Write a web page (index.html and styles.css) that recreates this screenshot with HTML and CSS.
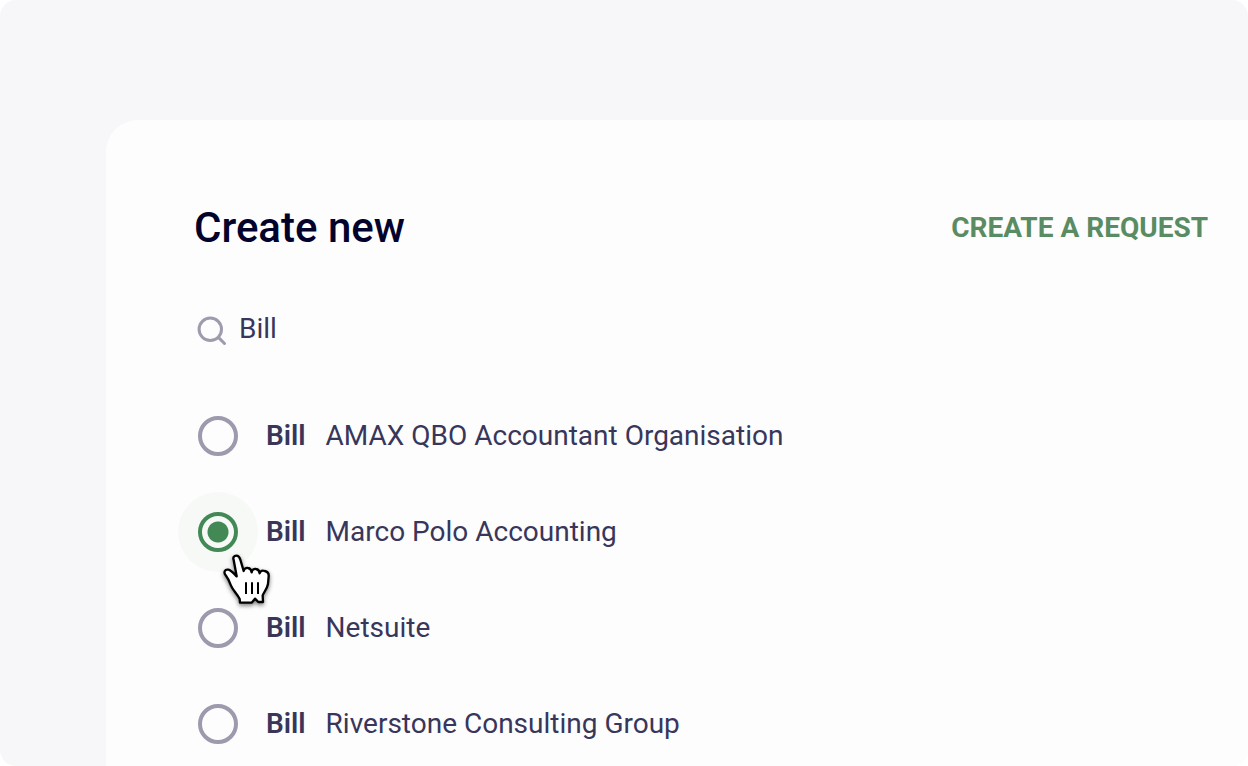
FILE: index.html
```html
<!DOCTYPE html>
<html lang="en">
<head>
<meta charset="utf-8">
<meta name="viewport" content="width=device-width, initial-scale=1">
<title>Create new</title>
<link rel="stylesheet" href="styles.css">
</head>
<body>
<div class="stage">
  <main class="panel">
    <header class="panel-header">
      <h1 class="title">Create new</h1>
      <button class="request" type="button">CREATE A REQUEST</button>
    </header>
    <div class="search">
      <svg class="search-icon" viewBox="0 0 32 32" aria-hidden="true"><circle cx="14.3" cy="14.3" r="11.2"/><path d="M22.4 22.4L28.5 28.5"/></svg>
      <input class="search-input" type="text" value="Bill" aria-label="Search">
    </div>
    <div class="options" role="radiogroup" aria-label="Organisation">
      <label class="option"><input class="radio" type="radio" name="org"><strong class="kind">Bill</strong><span>AMAX QBO Accountant Organisation</span></label>
      <label class="option"><input class="radio" type="radio" name="org" checked><strong class="kind">Bill</strong><span>Marco Polo Accounting</span>
        <svg class="cursor" viewBox="0 0 180 195" aria-hidden="true">
          <path class="hand" d="M56 45C53 37 57 32 64 32C71 32 74 37 76 44L86 78C87 71 93 68 99 69C106 70 109 74 110 82C111 74 117 71 123 72C130 73 133 78 134 85C136 77 143 76 149 78C158 80 162 85 161 94L159 117C157 130 147 141 143 151L144 171H130L120 161L110 173H75L74 162C66 145 54 137 48 122C44 112 40 101 32 91C25 82 29 72 40 74C49 76 57 86 65 94Z"/>
          <path class="fingers" d="M93 112V147M111 112V147M129 112V147"/>
        </svg>
      </label>
      <label class="option"><input class="radio" type="radio" name="org"><strong class="kind">Bill</strong><span>Netsuite</span></label>
      <label class="option"><input class="radio" type="radio" name="org"><strong class="kind">Bill</strong><span>Riverstone Consulting Group</span></label>
    </div>
  </main>
</div>
</body>
</html>
```
FILE: styles.css
```css
* { box-sizing: border-box; }

body {
  margin: 0;
  background: #fff;
  color: #38365b;
  font: 400 28px/40px Roboto, sans-serif;
}

.stage {
  display: flex;
  height: 100vh;
  padding: 120px 0 0 106px;
  overflow: hidden;
  border-radius: 16px;
  background: #f7f7f9;
}

.panel {
  flex: 1;
  padding: 80px 40px 0 88px;
  border-top-left-radius: 32px;
  background: #fdfdfd;
}

.panel-header {
  display: flex;
  align-items: center;
  justify-content: space-between;
}

.title {
  margin: 0;
  color: #03022d;
  font-size: 42px;
  font-weight: 500;
  line-height: 56px;
}

.request {
  padding: 0;
  border: 0;
  background: none;
  color: #5a8c63;
  font: inherit;
  font-weight: 700;
}

.search {
  display: flex;
  align-items: center;
  gap: 11px;
  margin: 53px 0 39px 2px;
}

.search-icon {
  width: 32px;
  height: 32px;
  margin-top: 3px;
  fill: none;
  stroke: #9d9bad;
  stroke-width: 3;
  stroke-linecap: round;
}

.search-input {
  flex: 1;
  min-width: 0;
  height: 40px;
  padding: 0;
  border: 0;
  outline: 0;
  background: none;
  color: inherit;
  font: inherit;
}

.option {
  position: relative;
  display: flex;
  align-items: center;
  height: 96px;
  padding-left: 4px;
}

.radio {
  flex: none;
  width: 40px;
  height: 40px;
  margin: 0 28px 0 0;
  border: 4px solid #9c9aad;
  border-radius: 50%;
  appearance: none;
}

.radio:checked {
  border-color: #438956;
  background: radial-gradient(circle, #438956 10px, #f7f9f7 11px);
  box-shadow: 0 0 0 20px #f7f9f7;
}

.kind {
  position: relative;
  margin-right: 20px;
  font-weight: 600;
}

.cursor {
  position: absolute;
  top: 61px;
  left: 21px;
  width: 60px;
  height: 65px;
  z-index: 1;
  filter: drop-shadow(0 2px 2px rgba(0, 0, 0, .5));
}

.hand {
  fill: #fff;
  stroke: #000;
  stroke-width: 7;
  stroke-linejoin: round;
}

.fingers {
  fill: none;
  stroke: #000;
  stroke-width: 6;
}
```
